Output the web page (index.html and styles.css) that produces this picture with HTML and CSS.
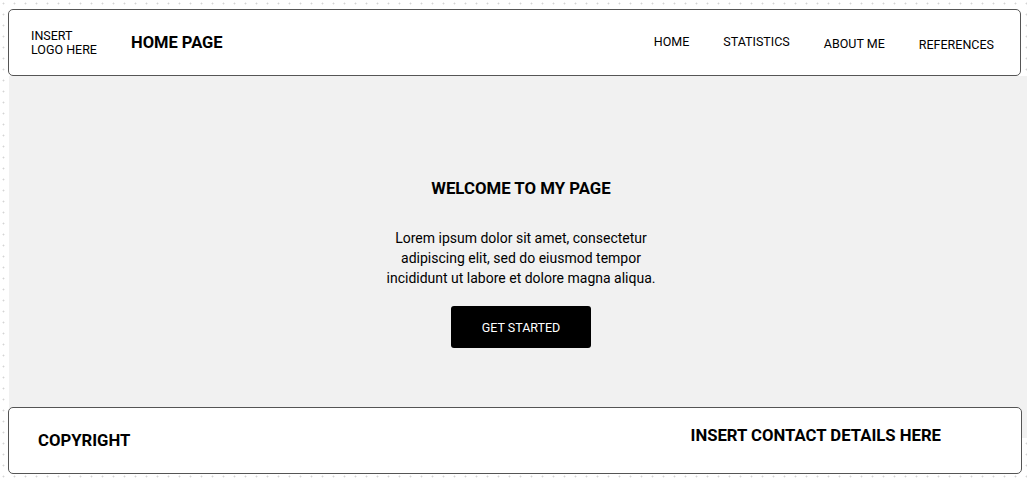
FILE: index.html
```html
<!DOCTYPE html>
<html lang="en">
<head>
<meta charset="utf-8">
<title>Home Page</title>
<link rel="stylesheet" href="styles.css">
</head>
<body>
<div class="page">
  <header class="topbar">
    <div class="logo">INSERT<br>LOGO HERE</div>
    <div class="title">HOME PAGE</div>
    <nav class="nav">
      <a class="nav-item nav-home">HOME</a>
      <a class="nav-item nav-stats">STATISTICS</a>
      <a class="nav-item nav-about">ABOUT ME</a>
      <a class="nav-item nav-refs">REFERENCES</a>
    </nav>
  </header>
  <main class="hero">
    <h1 class="hero-title">WELCOME TO MY PAGE</h1>
    <p class="hero-text">Lorem ipsum dolor sit amet, consectetur adipiscing elit, sed do eiusmod tempor incididunt ut labore et dolore magna aliqua.</p>
    <button class="cta">GET STARTED</button>
  </main>
  <footer class="footer">
    <div class="copyright">COPYRIGHT</div>
    <div class="contact">INSERT CONTACT DETAILS HERE</div>
  </footer>
</div>
</body>
</html>
```
FILE: styles.css
```css
html, body {
  margin: 0;
  padding: 0;
}
body {
  font-family: Roboto, "Liberation Sans", Arial, sans-serif;
  color: #000;
  background-color: #fff;
  background-image: radial-gradient(circle, #d4d4d4 0.7px, transparent 1.2px);
  background-size: 11px 11px;
  background-position: -2px -2px;
  width: 1027px;
  height: 478px;
  overflow: hidden;
}
.page {
  padding-top: 9px;
}
.topbar {
  margin-left: 8px;
  width: 989px;
  height: 65px;
  border: 1px solid #555;
  border-radius: 5px;
  background: #fff;
  display: flex;
  align-items: center;
  padding-left: 22px;
  box-sizing: content-box;
}
.logo {
  width: 100px;
  font-size: 12.5px;
  line-height: 14px;
}
.title {
  font-size: 16.5px;
  font-weight: 700;
}
.nav {
  margin-left: auto;
  margin-right: 26px;
  display: flex;
  align-items: center;
  gap: 34px;
}
.nav-item {
  font-size: 12.5px;
  line-height: 16px;
  color: #000;
  text-decoration: none;
}
.nav-home, .nav-stats { margin-bottom: 2px; }
.nav-about { margin-top: 2px; }
.nav-refs { margin-top: 4px; }
.hero {
  margin-left: 9px;
  width: 1018px;
  height: 362px;
  box-sizing: border-box;
  background: #f1f1f1;
  padding-top: 102px;
  padding-left: 6px;
  display: flex;
  flex-direction: column;
  align-items: center;
}
.hero-title {
  margin: 0;
  font-size: 16.8px;
  line-height: 20px;
  font-weight: 700;
}
.hero-text {
  margin: 30px 0 0;
  width: 280px;
  text-align: center;
  font-size: 14px;
  line-height: 20px;
}
.cta {
  margin-top: 18px;
  width: 140px;
  height: 42px;
  border: none;
  border-radius: 3px;
  background: #000;
  color: #fff;
  font-family: inherit;
  font-size: 12.5px;
  cursor: pointer;
}
.footer {
  margin-top: -31px;
  margin-left: 8px;
  width: 983px;
  height: 65px;
  border: 1px solid #555;
  border-radius: 5px;
  background: #fff;
  display: flex;
  align-items: center;
  padding-left: 29px;
  box-sizing: content-box;
}
.copyright {
  font-size: 16.7px;
  font-weight: 700;
}
.contact {
  margin-left: auto;
  margin-right: 80px;
  margin-bottom: 10px;
  font-size: 16.7px;
  font-weight: 700;
}
```
